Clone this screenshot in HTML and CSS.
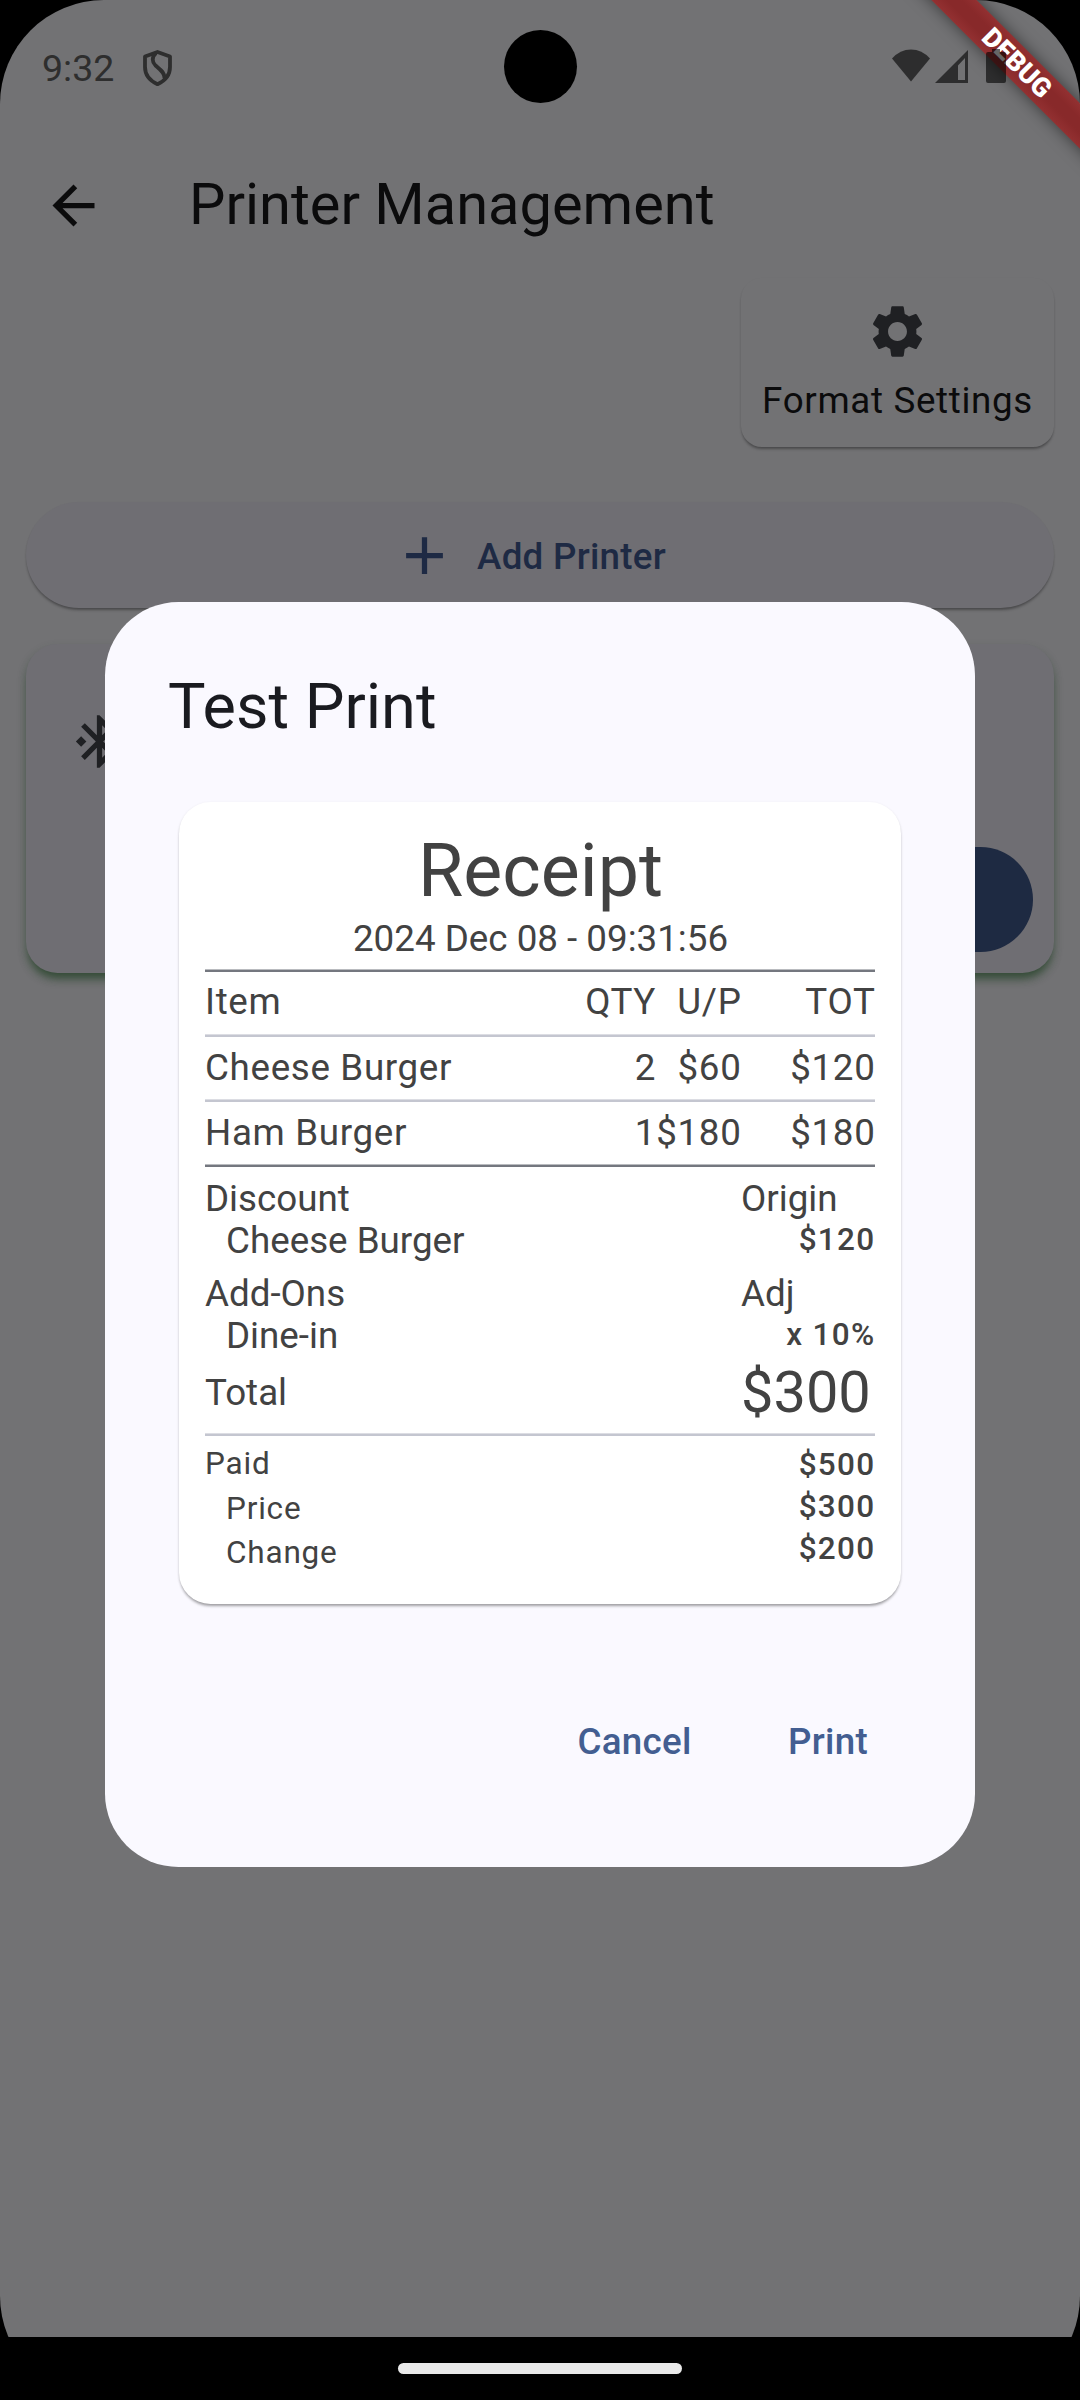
FILE: index.html
```html
<!DOCTYPE html>
<html lang="en">
<head>
<meta charset="utf-8">
<title>Printer Management</title>
<link rel="stylesheet" href="styles.css">
</head>
<body>
<div class="phone">
  <div class="debug-banner"><span>DEBUG</span></div>
  <header class="status-bar">
    <div class="status-left">
      <span class="clock">9:32</span>
      <svg class="shield" viewBox="0 0 29 36"><path d="M14.500 2L27 6.500V17C27 25 21.500 31 14.500 34.200C7.500 31 2 25 2 17V6.500Z"/><path d="M13 3C8.500 7 9 12 12.500 15.500C17 19.500 21.500 22 21.500 28"/></svg>
    </div>
    <div class="camera"></div>
    <div class="status-right">
      <svg class="wifi" viewBox="0 0 38 32"><path d="M0 9Q8 0 19 0T38 9L19 32Z"/></svg>
      <svg class="signal" viewBox="0 0 33 33"><path fill-rule="evenodd" d="M33 0V33H0ZM30 8L23 15.500V30H30Z"/></svg>
      <svg class="battery" viewBox="0 0 20 34"><path d="M6 0H14V3H18Q20 3 20 5V32Q20 34 18 34H2Q0 34 0 32V5Q0 3 2 3H6Z"/></svg>
    </div>
  </header>
  <div class="app-bar">
    <svg class="icon" viewBox="0 0 24 24"><path d="M20 11H7.830l5.590-5.590L12 4l-8 8 8 8 1.410-1.410L7.830 13H20v-2z"/></svg>
    <h1>Printer Management</h1>
  </div>
  <main class="content">
    <div class="format-card">
      <svg class="icon" viewBox="0 0 24 24"><path d="M19.140 12.940c.040-.300.060-.610.060-.940 0-.320-.020-.640-.070-.940l2.030-1.580c.180-.140.230-.410.120-.610l-1.920-3.320c-.120-.220-.370-.290-.590-.220l-2.390.960c-.500-.380-1.030-.700-1.620-.940l-.360-2.540c-.040-.240-.240-.410-.480-.410h-3.840c-.240 0-.430.170-.470.410l-.360 2.540c-.590.240-1.130.570-1.620.940l-2.390-.960c-.220-.080-.470 0-.590.220L2.740 8.870c-.120.210-.080.470.120.610l2.030 1.580c-.050.300-.090.630-.090.940s.020.640.070.940l-2.030 1.580c-.180.140-.230.410-.120.610l1.920 3.320c.120.220.370.290.590.220l2.390-.960c.500.380 1.030.700 1.620.940l.360 2.540c.050.240.240.410.480.410h3.840c.240 0 .440-.170.470-.410l.360-2.540c.590-.240 1.130-.560 1.620-.940l2.390.960c.220.080.470 0 .590-.220l1.920-3.320c.120-.220.070-.470-.120-.610l-2.010-1.580zM12 15.600c-1.980 0-3.600-1.620-3.600-3.600s1.620-3.600 3.600-3.600 3.600 1.620 3.600 3.600-1.620 3.600-3.600 3.600z"/></svg>
      <span>Format Settings</span>
    </div>
    <div class="add-button">
      <svg class="icon" viewBox="0 0 24 24"><path d="M19 13h-6v6h-2v-6H5v-2h6V5h2v6h6v2z"/></svg>
      <span>Add Printer</span>
    </div>
    <div class="printer-card">
      <svg class="icon" viewBox="0 0 24 24"><path d="M7 12l-2-2-2 2 2 2 2-2zm10.710-4.290L12 2h-1v7.590L6.410 5 5 6.410 10.590 12 5 17.590 6.410 19 11 14.410V22h1l5.710-5.710-4.300-4.290 4.300-4.290zM13 5.830l1.880 1.880L13 9.590V5.830zm1.880 10.460L13 18.170v-3.760l1.880 1.880zM19 10l-2 2 2 2 2-2-2-2z"/></svg>
      <div class="pill"></div>
    </div>
  </main>
  <nav class="nav-bar"><div class="handle"></div></nav>

  <section class="dialog">
    <h2>Test Print</h2>
    <div class="receipt">
      <div class="receipt-title">Receipt</div>
      <div class="receipt-date">2024 Dec 08 - 09:31:56</div>
      <div class="rule dark"></div>
      <div class="row head"><span>Item</span><span class="num">QTY</span><span class="num">U/P</span><span class="num">TOT</span></div>
      <div class="rule"></div>
      <div class="row"><span>Cheese Burger</span><span class="num">2</span><span class="num">$60</span><span class="num">$120</span></div>
      <div class="rule"></div>
      <div class="row"><span>Ham Burger</span><span class="num">1</span><span class="num">$180</span><span class="num">$180</span></div>
      <div class="rule dark"></div>
      <div class="block">
        <div class="names"><span>Discount</span><span class="sub">Cheese Burger</span></div>
        <div class="values"><span>Origin</span><span class="amount">$120</span></div>
      </div>
      <div class="block">
        <div class="names"><span>Add-Ons</span><span class="sub">Dine-in</span></div>
        <div class="values"><span>Adj</span><span class="amount">x 10%</span></div>
      </div>
      <div class="block total">
        <div class="names"><span>Total</span></div>
        <div class="values"><span class="sum">$300</span></div>
      </div>
      <div class="rule"></div>
      <div class="block paid">
        <div class="names"><span>Paid</span><span class="sub">Price</span><span class="sub">Change</span></div>
        <div class="values"><span class="amount">$500</span><span class="amount">$300</span><span class="amount">$200</span></div>
      </div>
    </div>
    <div class="actions"><span class="cancel">Cancel</span><span class="print">Print</span></div>
  </section>
</div>
</body>
</html>
```
FILE: styles.css
```css
* { box-sizing: border-box; }
body { margin: 0; background: #000; font-family: Roboto, sans-serif; }
h1, h2 { margin: 0; font-weight: 400; }
svg { display: block; flex: none; }
.phone {
  position: relative;
  display: flex;
  flex-direction: column;
  width: 1080px;
  height: 2400px;
  overflow: hidden;
  border-radius: 104px;
  background: linear-gradient(#727274 2337px, #000 2337px);
  font-size: 36.75px;
  color: #0b0b0c;
  white-space: nowrap;
}
.icon { width: 63px; height: 63px; fill: currentColor; }

/* status bar */
.status-bar {
  position: relative;
  display: grid;
  grid-template-columns: 503.500px 73px 1fr;
  align-items: center;
  height: 131px;
  color: #2e2e2e;
}
.status-left { display: flex; align-items: center; padding: 5px 0 0 42px; }
.clock { width: 101px; padding-bottom: 1px; font-size: 37.500px; line-height: 44px; }
.shield { width: 29px; height: 36px; fill: none; stroke: #2e2e2e; stroke-width: 3.8; stroke-linejoin: round; }
.camera { width: 73px; height: 73px; margin-top: 1px; border-radius: 50%; background: #000; }
.status-right { display: flex; align-items: center; padding: 1px 0 0 315.500px; fill: rgba(0, 0, 0, 0.6); }
.wifi { width: 38px; height: 33px; margin-right: 4.500px; margin-top: -1px; }
.signal { width: 33px; height: 33px; margin-right: 18.500px; }
.battery { width: 20px; height: 34px; }

.debug-banner {
  position: absolute;
  left: 877px;
  top: 47px;
  display: flex;
  justify-content: center;
  align-items: center;
  width: 280px;
  height: 32px;
  transform: rotate(45deg);
  background: linear-gradient(#933031, #88292a 35%, #88292a 65%, #933031);
  box-shadow: 0 0 16px rgba(0, 0, 0, 0.5);
  color: #fff;
  font-size: 26.800px;
  font-weight: 900;
}

/* app bar */
.app-bar { display: flex; align-items: center; gap: 84px; height: 147px; padding: 1px 0 0 42px; }
h1 { margin-top: -3px; font-size: 57.750px; line-height: 74px; }

/* page content */
.content { flex: 1; display: flex; flex-direction: column; padding: 0 26px; }
.format-card {
  align-self: flex-end;
  display: flex;
  flex-direction: column;
  align-items: center;
  width: 313px;
  height: 169px;
  padding-top: 22px;
  border-radius: 21px;
  box-shadow: 0 3px 3px -1px rgba(0, 0, 0, 0.32), 0 1px 2px rgba(0, 0, 0, 0.08);
  letter-spacing: 0.660px;
}
.format-card .icon { color: #1f2023; }
.format-card span { margin-top: 12px; line-height: 52px; }
.add-button {
  display: flex;
  justify-content: center;
  align-items: center;
  gap: 21px;
  height: 106px;
  margin-top: 55px;
  padding: 1px 21px 0 0;
  border-radius: 53px;
  background: #6f6e73;
  box-shadow: 0 3px 3px -1px rgba(0, 0, 0, 0.32), 0 1px 2px rgba(0, 0, 0, 0.08);
  color: #1e2a44;
  font-weight: 500;
  letter-spacing: 0.260px;
}
.add-button span { margin-top: 2px; }
.printer-card {
  display: flex;
  justify-content: space-between;
  height: 329px;
  margin-top: 36px;
  padding: 66px 21px 21px 42px;
  border-radius: 31.500px;
  background: #6f6e73;
  box-shadow: 0 8px 10px -3px rgba(32, 62, 34, 0.7), 0 5px 10px rgba(50, 75, 52, 0.3);
  color: #1f2023;
}
.pill { align-self: flex-end; width: 210px; height: 105px; border-radius: 53px; background: #1e2a42; }

.nav-bar { display: flex; justify-content: center; align-items: center; height: 63px; background: #000; }
.handle { width: 284px; height: 11px; border-radius: 6px; background: #e9e9e9; }

/* dialog */
.dialog {
  position: absolute;
  left: 105px;
  top: 602px;
  width: 870px;
  height: 1265px;
  padding: 63px 63px 0;
  border-radius: 73.500px;
  background: #faf9ff;
  color: #424242;
}
h2 { font-size: 63px; line-height: 84px; color: #1a1b20; }
.receipt {
  display: flex;
  flex-direction: column;
  width: 722px;
  height: 802px;
  margin: 53px 0 0 11px;
  padding: 26px 25px 0 26px;
  border-radius: 31.500px;
  background: #fff;
  box-shadow: 0 3px 3px -1px rgba(0, 0, 0, 0.32), 0 1px 3px rgba(0, 0, 0, 0.1);
}
.receipt-title { height: 86px; font-size: 73.500px; line-height: 86px; text-align: center; }
.receipt-date { height: 55px; line-height: 50px; text-align: center; }
.rule { flex: none; height: 3px; margin-right: 1px; background: linear-gradient(#dcdde3 1px, #c4c6d0 1px); }
.rule.dark { background: linear-gradient(#b9bbbf 1px, #74777f 1px); }
.row {
  display: grid;
  grid-template-columns: 1fr 90px 85.500px 134px;
  height: 62px;
  padding-right: 0.500px;
  line-height: 61px;
  letter-spacing: 0.660px;
}
.head { line-height: 59px; }
.num { display: flex; justify-content: flex-end; }
.block { display: flex; justify-content: space-between; margin-top: 11px; line-height: 42px; }
.names, .values { display: flex; flex-direction: column; }
.values { width: 135px; }
.sub { padding-left: 21px; }
.amount { margin: -1px 0 1px; padding-right: 0.500px; font-size: 31.500px; font-weight: 500; letter-spacing: 1.310px; text-align: right; }
.total { height: 76px; margin-top: 0; align-items: center; padding-bottom: 4px; }
.sum { margin-top: -3px; font-size: 57.750px; line-height: 72px; }
.paid { margin-top: 9px; }
.paid .names { margin-top: -3px; font-size: 31.500px; line-height: 44.500px; letter-spacing: 0.800px; }
.actions { display: flex; gap: 21px; justify-content: flex-end; margin-top: 75px; line-height: 126px; color: #435e91; font-weight: 500; letter-spacing: 0.260px; text-align: center; }
.cancel { width: 177px; }
.print { width: 168px; }
```
